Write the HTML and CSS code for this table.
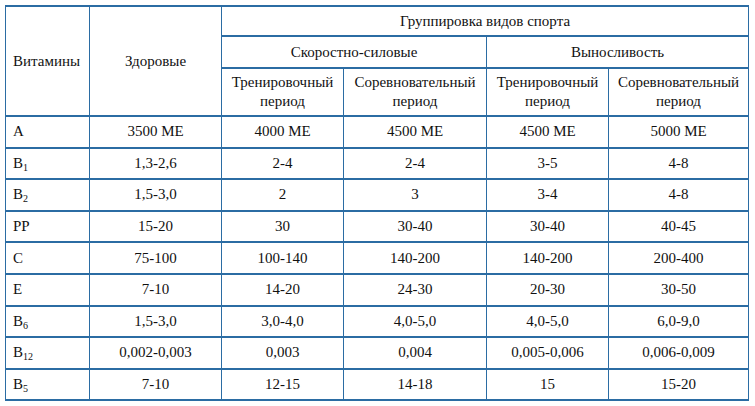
FILE: index.html
```html
<!DOCTYPE html>
<html lang="ru">
<head>
<meta charset="utf-8">
<link rel="stylesheet" href="styles.css">
</head>
<body>
<table class="vit">
  <colgroup>
    <col class="c1"><col class="c2"><col class="c3"><col class="c4"><col class="c5"><col class="c6">
  </colgroup>
  <thead>
    <tr class="h1">
      <th rowspan="3" class="left">Витамины</th>
      <th rowspan="3">Здоровые</th>
      <th colspan="4">Группировка видов спорта</th>
    </tr>
    <tr class="h2">
      <th colspan="2">Скоростно-силовые</th>
      <th colspan="2">Выносливость</th>
    </tr>
    <tr class="h3">
      <th>Тренировочный<br>период</th>
      <th>Соревновательный<br>период</th>
      <th>Тренировочный<br>период</th>
      <th>Соревновательный<br>период</th>
    </tr>
  </thead>
  <tbody>
    <tr><td class="left">A</td><td>3500 МЕ</td><td>4000 МЕ</td><td>4500 МЕ</td><td>4500 МЕ</td><td>5000 МЕ</td></tr>
    <tr><td class="left">B<sub>1</sub></td><td>1,3-2,6</td><td>2-4</td><td>2-4</td><td>3-5</td><td>4-8</td></tr>
    <tr><td class="left">B<sub>2</sub></td><td>1,5-3,0</td><td>2</td><td>3</td><td>3-4</td><td>4-8</td></tr>
    <tr><td class="left">PP</td><td>15-20</td><td>30</td><td>30-40</td><td>30-40</td><td>40-45</td></tr>
    <tr><td class="left">C</td><td>75-100</td><td>100-140</td><td>140-200</td><td>140-200</td><td>200-400</td></tr>
    <tr><td class="left">E</td><td>7-10</td><td>14-20</td><td>24-30</td><td>20-30</td><td>30-50</td></tr>
    <tr><td class="left">B<sub>6</sub></td><td>1,5-3,0</td><td>3,0-4,0</td><td>4,0-5,0</td><td>4,0-5,0</td><td>6,0-9,0</td></tr>
    <tr><td class="left">B<sub>12</sub></td><td>0,002-0,003</td><td>0,003</td><td>0,004</td><td>0,005-0,006</td><td>0,006-0,009</td></tr>
    <tr><td class="left">B<sub>5</sub></td><td>7-10</td><td>12-15</td><td>14-18</td><td>15</td><td>15-20</td></tr>
  </tbody>
</table>
</body>
</html>
```
FILE: styles.css
```css
html, body {
  margin: 0;
  background: #ffffff;
}
body {
  padding: 5px 0 0 5px;
  font-family: "Liberation Serif", "Times New Roman", serif;
  font-size: 15px;
  color: #111111;
}
.vit {
  border-collapse: collapse;
  table-layout: fixed;
  width: 743px;
}
.c1 { width: 84px; }
.c2 { width: 132px; }
.c3 { width: 122px; }
.c4 { width: 143px; }
.c5 { width: 122px; }
.c6 { width: 140px; }
.vit th, .vit td {
  font-family: inherit;
  font-size: 15px;
  font-weight: normal;
  border-left: 1px solid #2b6ca3;
  border-right: 1px solid #2b6ca3;
  border-top: 2px solid #2b6ca3;
  border-bottom: 2px solid #2b6ca3;
  text-align: center;
  vertical-align: middle;
  padding: 0 4px;
  line-height: 19px;
}
.vit .left {
  text-align: left;
  padding-left: 7px;
}
.h1 th { height: 28px; }
.h2 th { height: 30px; }
.h3 th { height: 46px; }
.vit tbody td { height: 29.6px; }
.vit sub {
  font-size: 10px;
  vertical-align: -3px;
  line-height: 0;
}
```
